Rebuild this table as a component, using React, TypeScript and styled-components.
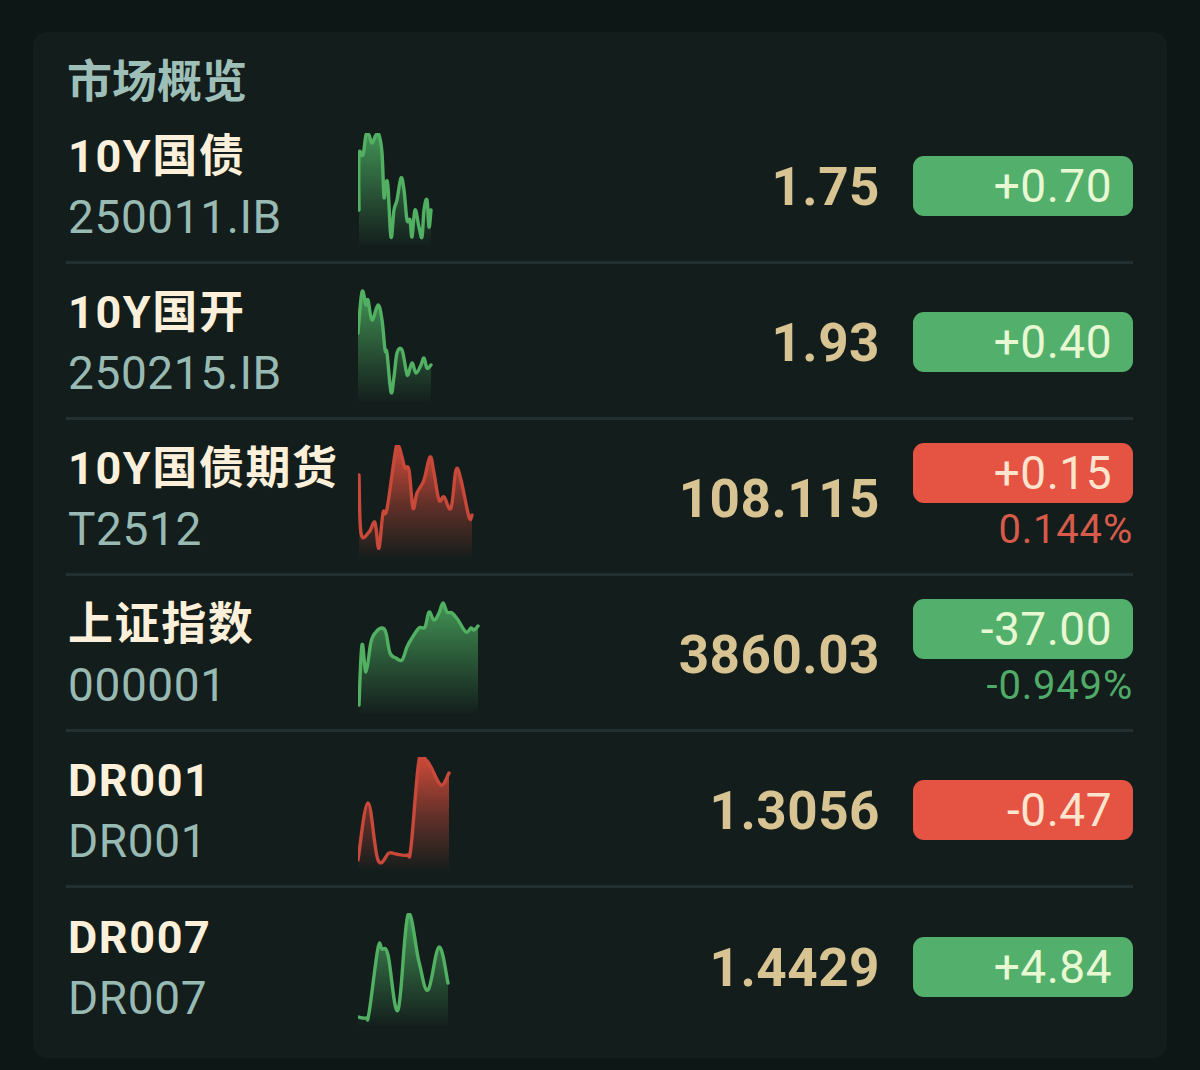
import React from "react";
import styled, { createGlobalStyle } from "styled-components";

const GlobalStyle = createGlobalStyle`
  html, body {
    margin: 0;
    padding: 0;
    background: #0d1716;
  }
  body {
    font-family: Roboto, "Noto Sans CJK SC", sans-serif;
    -webkit-font-smoothing: antialiased;
  }
`;

const Page = styled.div`
  width: 1200px;
  height: 1070px;
  box-sizing: border-box;
  padding: 32px 33px 0 33px;
  background: #0d1716;
`;

const Card = styled.section`
  background: #131d1c;
  border-radius: 14px;
  padding: 18px 34px 14px 33px;
`;

const Title = styled.h2`
  margin: 0;
  height: 58px;
  line-height: 58px;
  font-size: 45px;
  font-weight: 700;
  color: #9dbfb8;
  font-family: "Noto Sans CJK SC", Roboto, sans-serif;
  padding-left: 1px;
`;

const Row = styled.div<{ $last?: boolean }>`
  display: grid;
  grid-template-columns: 292px 122px 1fr 220px;
  align-items: center;
  height: 156px;
  box-sizing: border-box;
  border-bottom: ${(p) => (p.$last ? "none" : "3px solid #223031")};
`;

const NameCol = styled.div`
  display: flex;
  flex-direction: column;
  padding-left: 2px;
  margin-top: 4px;
`;

const Name = styled.div`
  font-family: Roboto, "Noto Sans CJK SC", sans-serif;
  font-weight: 700;
  font-size: 45px;
  line-height: 60px;
  color: #fcf0da;
  white-space: nowrap;
  letter-spacing: 1.6px;
`;

const Code = styled.div`
  font-family: Roboto, sans-serif;
  font-weight: 400;
  font-size: 46px;
  line-height: 60px;
  color: #98bab3;
  letter-spacing: 0.6px;
`;

const ChartBox = styled.div`
  align-self: start;
  margin-top: 25px;
  width: 122px;
  height: 112px;
  svg {
    display: block;
  }
`;

const Value = styled.div`
  text-align: right;
  padding-right: 33px;
  margin-top: 5px;
  font-family: Roboto, sans-serif;
  font-weight: 700;
  font-size: 53px;
  line-height: 1;
  color: #d7c492;
  letter-spacing: 0.5px;
`;

const ChangeCol = styled.div`
  display: flex;
  flex-direction: column;
  align-items: flex-end;
  margin-top: 2px;
`;

const Badge = styled.div<{ $up: boolean }>`
  width: 220px;
  height: 60px;
  box-sizing: border-box;
  border-radius: 11px;
  background: ${(p) => (p.$up ? "#52b06c" : "#e55443")};
  color: ${(p) => (p.$up ? "#e8f8d3" : "#fde4cf")};
  font-family: Roboto, sans-serif;
  font-size: 46px;
  font-weight: 400;
  line-height: 60px;
  text-align: right;
  padding-right: 21px;
  letter-spacing: 0.5px;
`;

const Pct = styled.div<{ $up: boolean }>`
  margin-top: 4px;
  font-family: Roboto, sans-serif;
  font-size: 40px;
  line-height: 46px;
  color: ${(p) => (p.$up ? "#4fab67" : "#d75a4a")};
  letter-spacing: 0.8px;
`;

type Pt = [number, number];

function smoothPath(pts: Pt[]): string {
  if (pts.length < 2) return "";
  let d = `M${pts[0][0]},${pts[0][1]}`;
  const t = 0.18;
  for (let i = 0; i < pts.length - 1; i++) {
    const p0 = pts[i - 1] || pts[i];
    const p1 = pts[i];
    const p2 = pts[i + 1];
    const p3 = pts[i + 2] || p2;
    const c1x = p1[0] + (p2[0] - p0[0]) * t;
    const c1y = p1[1] + (p2[1] - p0[1]) * t;
    const c2x = p2[0] - (p3[0] - p1[0]) * t;
    const c2y = p2[1] - (p3[1] - p1[1]) * t;
    d += ` C${c1x.toFixed(1)},${c1y.toFixed(1)} ${c2x.toFixed(1)},${c2y.toFixed(1)} ${p2[0]},${p2[1]}`;
  }
  return d;
}

const Sparkline: React.FC<{ id: string; pts: Pt[]; up: boolean }> = ({ id, pts, up }) => {
  const line = smoothPath(pts);
  const last = pts[pts.length - 1];
  const area = `${line} L${last[0]},112 L${pts[0][0]},112 Z`;
  const stroke = up ? "#52b062" : "#c8483a";
  const top = up ? "#4aa85e" : "#e04e3c";
  return (
    <svg width="122" height="112" viewBox="0 0 122 112">
      <defs>
        <linearGradient id={id} x1="0" y1="0" x2="0" y2="1">
          <stop offset="0%" stopColor={top} stopOpacity={up ? 0.85 : 0.95} />
          <stop offset="55%" stopColor={top} stopOpacity={0.38} />
          <stop offset="100%" stopColor={top} stopOpacity={0.02} />
        </linearGradient>
      </defs>
      <path d={area} fill={`url(#${id})`} />
      <path d={line} fill="none" stroke={stroke} strokeWidth={3.4} strokeLinejoin="round" strokeLinecap="round" />
    </svg>
  );
};

interface Item {
  name: string;
  code: string;
  chartUp: boolean;
  pts: Pt[];
  value: string;
  change: string;
  badgeUp: boolean;
  pct?: string;
}

const items: Item[] = [
  {
    name: "10Y国债",
    code: "250011.IB",
    chartUp: true,
    pts: [[1, 77], [1, 22], [5, 22], [8, 2], [11, 2], [14, 10], [18, 2], [21, 2], [24, 20], [26, 64], [28, 50], [30, 54], [33, 104], [36, 77], [39, 67], [43, 45], [46, 57], [49, 87], [52, 87], [54, 104], [57, 77], [61, 94], [64, 104], [66, 77], [69, 67], [71, 94], [73, 77]],
    value: "1.75",
    change: "+0.70",
    badgeUp: true,
  },
  {
    name: "10Y国开",
    code: "250215.IB",
    chartUp: true,
    pts: [[0, 44], [4, 3], [8, 16], [10, 11], [14, 31], [20, 16], [24, 31], [27, 61], [29, 64], [33, 103], [36, 88], [39, 64], [44, 61], [48, 81], [50, 86], [54, 74], [58, 84], [63, 76], [66, 69], [69, 79], [73, 76]],
    value: "1.93",
    change: "+0.40",
    badgeUp: true,
  },
  {
    name: "10Y国债期货",
    code: "T2512",
    chartUp: false,
    pts: [[1, 30], [3, 88], [11, 87], [16, 77], [18, 83], [21, 103], [25, 68], [29, 64], [38, 3], [41, 2], [44, 12], [47, 23], [51, 25], [55, 63], [59, 48], [66, 35], [72, 12], [76, 28], [81, 55], [86, 52], [93, 63], [98, 25], [103, 35], [111, 72], [114, 70]],
    value: "108.115",
    change: "+0.15",
    badgeUp: false,
    pct: "0.144%",
  },
  {
    name: "上证指数",
    code: "000001",
    chartUp: true,
    pts: [[1, 104], [4, 44], [8, 71], [13, 41], [18, 31], [24, 27], [28, 32], [32, 52], [38, 57], [44, 59], [49, 46], [54, 37], [61, 27], [67, 26], [71, 11], [76, 19], [81, 12], [85, 2], [89, 11], [94, 12], [100, 19], [108, 31], [113, 27], [116, 29], [120, 25]],
    value: "3860.03",
    change: "-37.00",
    badgeUp: true,
    pct: "-0.949%",
  },
  {
    name: "DR001",
    code: "DR001",
    chartUp: false,
    pts: [[0, 103], [10, 46], [20, 103], [31, 96], [38, 97], [49, 98], [53, 90], [61, 3], [68, 3], [73, 10], [83, 28], [91, 16]],
    value: "1.3056",
    change: "-0.47",
    badgeUp: false,
  },
  {
    name: "DR007",
    code: "DR007",
    chartUp: true,
    pts: [[0, 104], [8, 105], [11, 100], [20, 35], [24, 36], [30, 42], [40, 97], [50, 2], [61, 49], [70, 77], [81, 34], [90, 70]],
    value: "1.4429",
    change: "+4.84",
    badgeUp: true,
  },
];

export default function App() {
  return (
    <>
      <GlobalStyle />
      <Page>
        <Card>
          <Title>市场概览</Title>
          {items.map((it, i) => (
            <Row key={it.name} $last={i === items.length - 1}>
              <NameCol>
                <Name>{it.name}</Name>
                <Code>{it.code}</Code>
              </NameCol>
              <ChartBox>
                <Sparkline id={`g${i}`} pts={it.pts} up={it.chartUp} />
              </ChartBox>
              <Value>{it.value}</Value>
              <ChangeCol>
                <Badge $up={it.badgeUp}>{it.change}</Badge>
                {it.pct && <Pct $up={it.badgeUp}>{it.pct}</Pct>}
              </ChangeCol>
            </Row>
          ))}
        </Card>
      </Page>
    </>
  );
}
